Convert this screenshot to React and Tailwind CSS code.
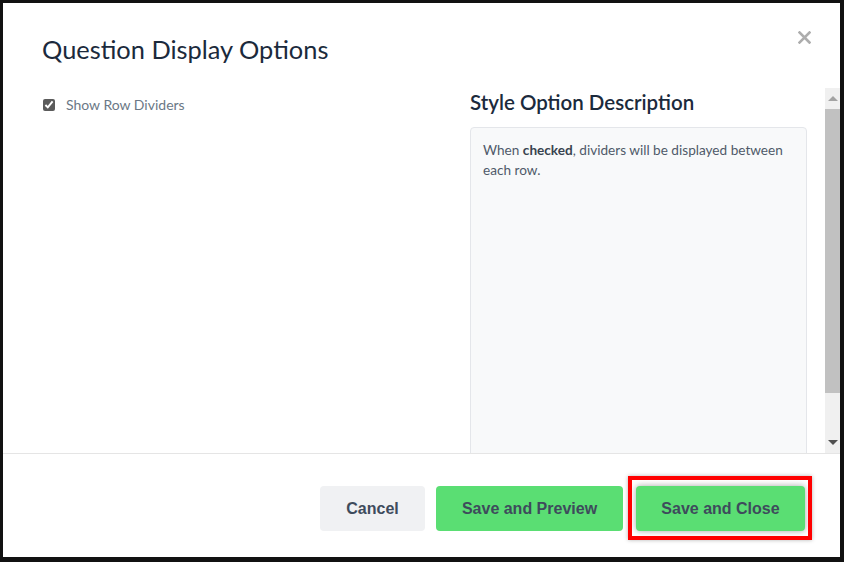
import React, { useState } from 'react';

const ScrollBar = () => (
  <div className='w-[15px] bg-[#f0f0f0] flex flex-col items-center shrink-0'>
    <div className='h-[21px] flex items-center justify-center'>
      <div className='w-0 h-0 border-l-[5px] border-r-[5px] border-b-[5px] border-l-transparent border-r-transparent border-b-[#a3a3a3]' />
    </div>
    <div className='w-full h-[284px] bg-[#c1c1c1]' />
    <div className='flex-1' />
    <div className='h-[21px] flex items-center justify-center'>
      <div className='w-0 h-0 border-l-[5px] border-r-[5px] border-t-[5px] border-l-transparent border-r-transparent border-t-[#505050]' />
    </div>
  </div>
);

export default function App() {
  const [showDividers, setShowDividers] = useState(true);

  return (
    <div className='w-[844px] h-[562px] bg-white border-t-[3px] border-l-[3px] border-r-4 border-b-[5px] border-[#111] flex flex-col overflow-hidden' style={{ fontFamily: 'Lato, "Open Sans", sans-serif' }}>
      <div className='h-[85px] shrink-0 flex justify-between pl-[39px] pr-[29px]'>
        <h1 className='text-[25.4px] text-[#1b2a3c] pt-[30px] leading-[32px]'>Question Display Options</h1>
        <button className='pt-[28px] self-start'>
          <svg width='13' height='13' viewBox='0 0 13 13'>
            <path d='M1.5 1.5 L11.5 11.5 M11.5 1.5 L1.5 11.5' stroke='#adadad' strokeWidth='2.6' strokeLinecap='square' />
          </svg>
        </button>
      </div>

      <div className='h-[365px] shrink-0 flex'>
        <div className='flex-1 flex overflow-hidden pl-[40px] pr-[18px]'>
          <div className='w-[427px] shrink-0 pt-[7px]'>
            <label className='flex items-center gap-[11px] text-[14px] text-[#6b7886] cursor-pointer'>
              <input type='checkbox' checked={showDividers} onChange={() => setShowDividers(!showDividers)} className='w-[12px] h-[12px] m-0 accent-[#5b5b5b]' />
              <span className='leading-[20px]'>Show Row Dividers</span>
            </label>
          </div>
          <div className='flex-1 pt-[3px] flex flex-col'>
            <h2 className='text-[20.5px] font-semibold text-[#1b2a3c] leading-[22px]'>Style Option Description</h2>
            <div className='mt-[14px] flex-1 min-h-[360px] bg-[#f8f9fa] border border-[#e4e6ea] rounded-[4px] px-[12px] pt-[12px] text-[13.6px] leading-[20px] text-[#4f5a69]'>
              When <b className='text-[#38434f]'>checked</b>, dividers will be displayed between each row.
            </div>
          </div>
        </div>
        <ScrollBar />
      </div>

      <div className='flex-1 border-t border-[#e5e5e5] flex justify-end items-start pt-[32px] pr-[35px]' style={{ fontFamily: '"Liberation Sans", Arial, sans-serif' }}>
        <button className='w-[105px] h-[45px] rounded-[4px] bg-[#f0f1f3] text-[#3e4b5c] text-[16px] font-bold mr-[11px]'>Cancel</button>
        <button className='w-[187px] h-[45px] rounded-[4px] bg-[#5ade73] text-[#3e4b5c] text-[16px] font-bold mr-[13px]'>Save and Preview</button>
        <div className='relative'>
          <button className='w-[169px] h-[45px] rounded-[4px] bg-[#5ade73] text-[#3e4b5c] text-[16px] font-bold shadow-[0_0_6px_rgba(0,0,0,0.35)]'>Save and Close</button>
          <span className='absolute -left-[8px] -right-[7px] -top-[10px] -bottom-[9px] border-4 border-[#f00] shadow-[0_0_4px_rgba(0,0,0,0.3)] pointer-events-none' />
        </div>
      </div>
    </div>
  );
}
